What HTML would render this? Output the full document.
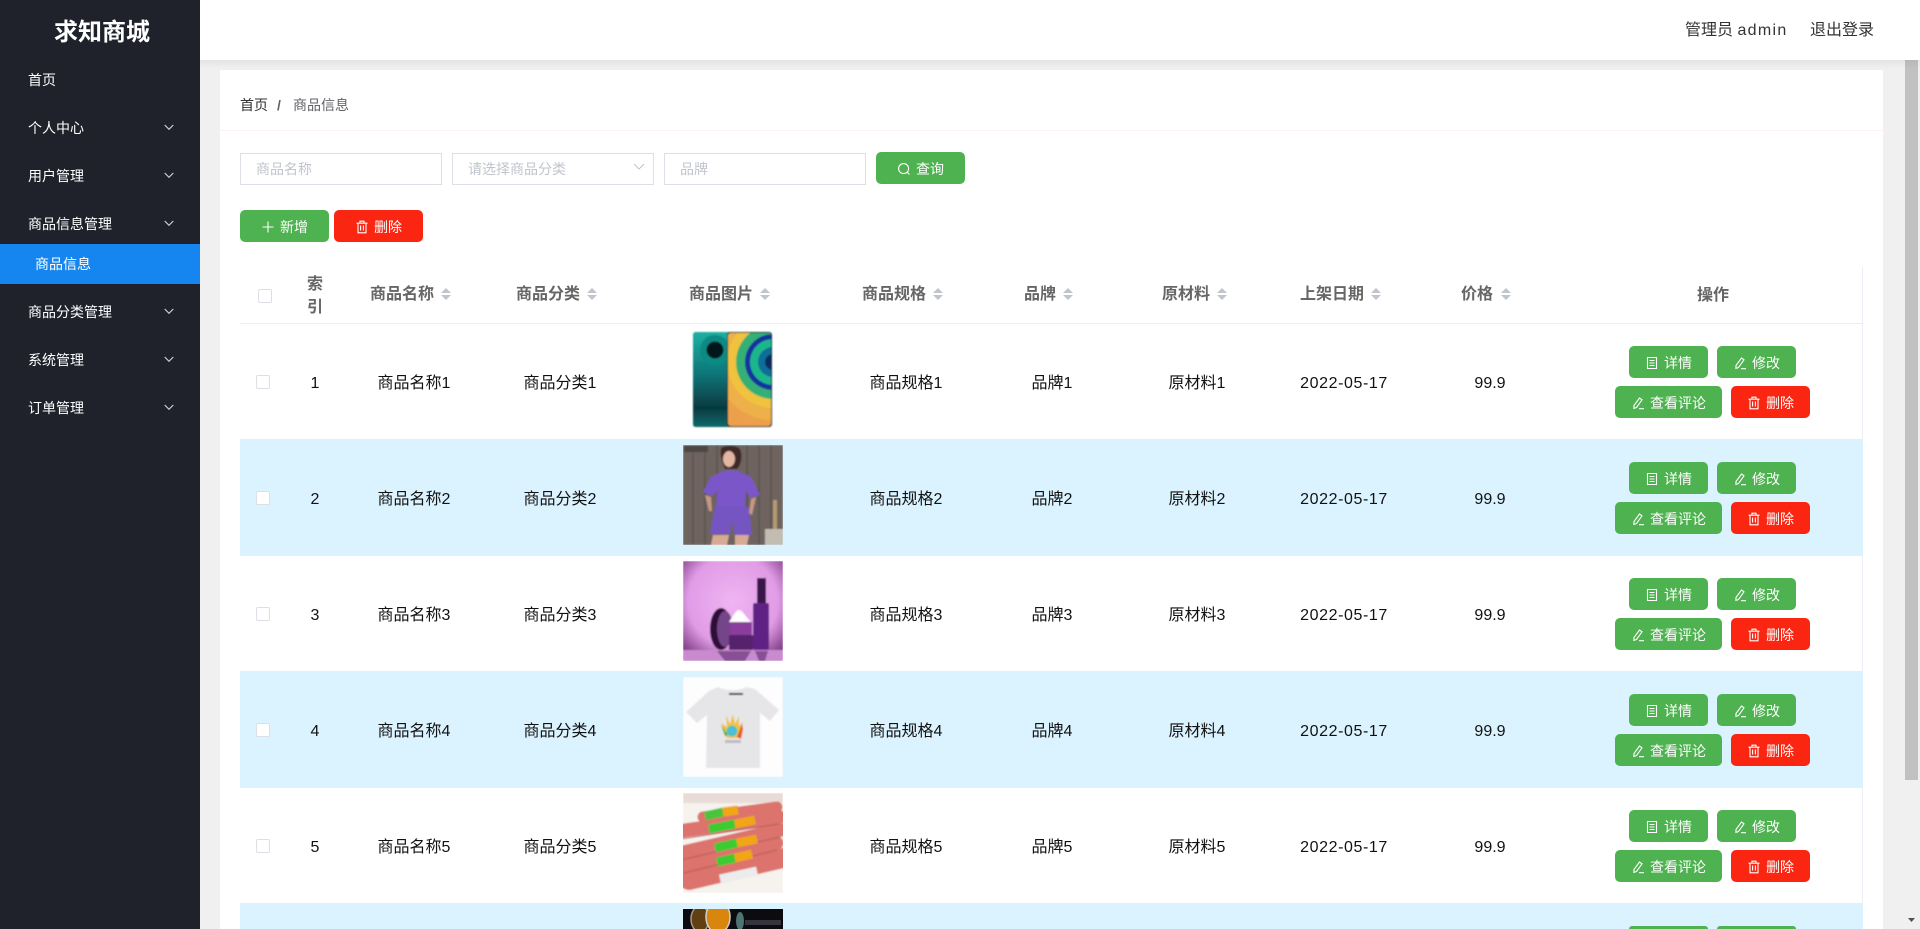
<!DOCTYPE html>
<html lang="zh-CN">
<head>
<meta charset="utf-8">
<title>求知商城</title>
<style>
*{box-sizing:border-box;margin:0;padding:0}
html,body{width:1920px;height:929px;overflow:hidden;background:#f0f0f0;font-family:"Liberation Sans","Noto Sans CJK SC",sans-serif}
#wrap{position:relative;width:1920px;height:929px;overflow:hidden;background:#f0f0f0}
.a{position:absolute}
#side{left:0;top:0;width:200px;height:929px;background:#1f222b;color:#fff;font-size:14px;z-index:4}
#side .logo{position:absolute;left:0;width:200px;top:15px;padding-left:4px;text-align:center;font-size:24px;font-weight:bold;line-height:36px}
#side .m{position:absolute;left:28px;line-height:21px;white-space:nowrap}
#side svg{position:absolute;left:164px;width:10px;height:7px}
#act{position:absolute;left:0;top:244px;width:200px;height:40px;background:#1586ef}
#head{left:0;top:0;width:1920px;height:60px;background:#fff;z-index:3;box-shadow:0 2px 8px rgba(0,0,0,.08)}
#head span{position:absolute;top:20px;font-size:16px;line-height:22px;color:#333;white-space:nowrap}
#card{left:220px;top:70px;width:1663px;height:859px;background:#fff}
#sb{left:1905px;top:60px;width:13px;height:720px;background:#c1c1c1}
.bc{position:absolute;top:95px;font-size:14px;line-height:21px;white-space:nowrap}
.inp{position:absolute;top:153px;width:202px;height:32px;border:1px solid #dcdfe6;background:#fff;color:#c0c4cc;font-size:14px;line-height:31px;padding-left:15px;white-space:nowrap}
.btn{position:absolute;height:32px;border-radius:5px;color:#fff;font-size:14px;line-height:34px;white-space:nowrap;text-align:center;overflow:hidden}
.g{background:#4db24f}
.r{background:#fa2612}
.btn svg{width:14px;height:14px;vertical-align:-2px;margin-right:5px}
.th{position:absolute;top:285px;font-size:16px;line-height:20px;font-weight:bold;color:#666;white-space:nowrap}
.up,.dn{position:absolute;width:0;height:0;border-left:5px solid transparent;border-right:5px solid transparent}
.up{top:288px;border-bottom:5px solid #c0c4cc}
.dn{top:295px;border-top:5px solid #c0c4cc}
.chk{position:absolute;width:14px;height:14px;border:1px solid #dcdfe6;border-radius:2px;background:#fff}
.bg{position:absolute;left:240px;width:1623px;background:#dbf3ff}
.row{position:absolute;left:0;width:1920px;height:116px}
.c{position:absolute;top:0;height:116px;line-height:120px;font-size:16px;color:#111;text-align:center;white-space:nowrap;width:140px}
.d{letter-spacing:.6px}
.row .chk{left:256px;top:51px}
.row svg.pic{position:absolute;left:683px;top:5px;width:100px;height:100px}
.b1{left:1629px;width:79px;top:22px}
.b2{left:1717px;width:79px;top:22px}
.b3{left:1615px;width:107px;top:62px}
.b4{left:1731px;width:79px;top:62px}
svg.i{fill:none;stroke:#fff;stroke-width:1.1}
</style>
</head>
<body>
<svg width="0" height="0" style="position:absolute">
<defs>
<symbol id="doc" viewBox="0 0 14 14"><path d="M2.5 1.5h9v11h-9z M4.5 4.5h5 M4.5 7h5 M4.5 9.5h5" fill="none" stroke="#fff" stroke-width="1.1"/></symbol>
<symbol id="pen" viewBox="0 0 14 14"><path d="M3 9.5 8.5 2l2.5 1.8-5.5 7.7-2.6.9zM8 12.7h5" fill="none" stroke="#fff" stroke-width="1.1"/></symbol>
<symbol id="del" viewBox="0 0 14 14"><path d="M1.5 3.2h11M5 3V1.2h4V3M3 3.2v9.6h8V3.2M5.6 5.5v5M8.4 5.5v5" fill="none" stroke="#fff" stroke-width="1.1"/></symbol>
<symbol id="chev" viewBox="0 0 10 7"><path d="M.7 1 5 5.3 9.3 1" fill="none" stroke="#c9ccd1" stroke-width="1.2"/></symbol>
<filter id="bl" x="-5%" y="-5%" width="110%" height="110%"><feGaussianBlur stdDeviation=".7"/></filter>
<clipPath id="scr"><rect x="45" y="4" width="43" height="93" rx="3"/></clipPath>
<linearGradient id="teal" x1="0" y1="0" x2="0" y2="1"><stop offset="0" stop-color="#1fb0a2"/><stop offset=".45" stop-color="#0b7477"/><stop offset=".8" stop-color="#06393f"/><stop offset="1" stop-color="#0b6a6c"/></linearGradient>
<radialGradient id="pk" cx=".5" cy=".4" r=".75"><stop offset="0" stop-color="#f0b4f2"/><stop offset=".6" stop-color="#e09ce6"/><stop offset="1" stop-color="#66246c"/></radialGradient>
</defs>
</svg>
<div id="wrap">
<div id="side" class="a">
<div class="logo">求知商城</div>
<div class="m" style="top:70px">首页</div>
<div class="m" style="top:118px">个人中心</div><svg style="top:124px"><use href="#chev"/></svg>
<div class="m" style="top:166px">用户管理</div><svg style="top:172px"><use href="#chev"/></svg>
<div class="m" style="top:214px">商品信息管理</div><svg style="top:220px"><use href="#chev"/></svg>
<div id="act"></div>
<div class="m" style="top:254px;left:35px">商品信息</div>
<div class="m" style="top:302px">商品分类管理</div><svg style="top:308px"><use href="#chev"/></svg>
<div class="m" style="top:350px">系统管理</div><svg style="top:356px"><use href="#chev"/></svg>
<div class="m" style="top:398px">订单管理</div><svg style="top:404px"><use href="#chev"/></svg>
</div>

<div id="head" class="a">
<span style="left:1685px">管理员 <span style="position:static;letter-spacing:1.3px">admin</span></span>
<span style="left:1810px">退出登录</span>
</div>

<div id="sb" class="a"></div>
<svg class="a" style="left:1908px;top:918px" width="7" height="4"><path d="M0 0h7L3.5 4z" fill="#505050"/></svg>
<div id="card" class="a"></div>

<div class="bc" style="left:240px;color:#303133">首页</div>
<div class="bc" style="left:277px;color:#606266;font-weight:bold">/</div>
<div class="bc" style="left:293px;color:#606266">商品信息</div>
<div class="a" style="left:220px;top:130px;width:1663px;height:1px;background:#fdf0f6"></div>

<div class="inp" style="left:240px">商品名称</div>
<div class="inp" style="left:452px">请选择商品分类
<svg class="a" style="left:180px;top:9px" width="12" height="8"><path d="M1 1l5 5 5-5" fill="none" stroke="#c0c4cc" stroke-width="1"/></svg></div>
<div class="inp" style="left:664px">品牌</div>
<div class="btn g" style="left:876px;top:152px;width:89px"><svg viewBox="0 0 14 14" class="i" style="margin-right:5px"><circle cx="6.6" cy="6.6" r="5"/><path d="M10.2 10.2 12.5 12.5"/></svg>查询</div>
<div class="btn g" style="left:240px;top:210px;width:89px"><svg viewBox="0 0 14 14" class="i"><path d="M7 1.5v11M1.5 7h11"/></svg>新增</div>
<div class="btn r" style="left:334px;top:210px;width:89px"><svg><use href="#del"/></svg>删除</div>

<div class="a" style="left:1862px;top:267px;width:1px;height:662px;background:#ebeef5"></div>
<div class="chk" style="left:258px;top:289px"></div>
<div class="th" style="left:307px;top:275px">索</div>
<div class="th" style="left:307px;top:298px">引</div>
<div class="th" style="left:370px">商品名称</div><i class="up" style="left:441px"></i><i class="dn" style="left:441px"></i>
<div class="th" style="left:516px">商品分类</div><i class="up" style="left:587px"></i><i class="dn" style="left:587px"></i>
<div class="th" style="left:689px">商品图片</div><i class="up" style="left:760px"></i><i class="dn" style="left:760px"></i>
<div class="th" style="left:862px">商品规格</div><i class="up" style="left:933px"></i><i class="dn" style="left:933px"></i>
<div class="th" style="left:1024px">品牌</div><i class="up" style="left:1063px"></i><i class="dn" style="left:1063px"></i>
<div class="th" style="left:1162px">原材料</div><i class="up" style="left:1217px"></i><i class="dn" style="left:1217px"></i>
<div class="th" style="left:1300px">上架日期</div><i class="up" style="left:1371px"></i><i class="dn" style="left:1371px"></i>
<div class="th" style="left:1461px">价格</div><i class="up" style="left:1501px"></i><i class="dn" style="left:1501px"></i>
<div class="th" style="left:1697px;top:286px">操作</div>
<div class="a" style="left:240px;top:323px;width:1623px;height:1px;background:#ebeef5"></div>

<div class="bg" style="top:439px;height:117px"></div>
<div class="bg" style="top:671px;height:117px"></div>
<div class="bg" style="top:903px;height:26px"></div>

<!-- row 1 -->
<div class="row" style="top:324px">
<div class="chk"></div><div class="c" style="left:245px">1</div><div class="c" style="left:344px">商品名称1</div><div class="c" style="left:490px">商品分类1</div>
<svg class="pic" viewBox="0 0 100 100"><g filter="url(#bl)"><rect x="10" y="3" width="44" height="95" rx="2.5" fill="url(#teal)"/><circle cx="32" cy="21" r="15" fill="#0f8a84"/><circle cx="32" cy="21" r="8.5" fill="#02161c"/><rect x="44" y="3" width="45" height="95" rx="3" fill="#17363a"/><g clip-path="url(#scr)"><rect x="45" y="4" width="43" height="93" fill="#eca04c"/><circle cx="90" cy="33" r="58" fill="#eeb04a"/><circle cx="90" cy="33" r="46" fill="#f0c23c"/><circle cx="90" cy="33" r="37" fill="#36b074"/><circle cx="90" cy="33" r="28" fill="#14329e"/><circle cx="90" cy="33" r="23" fill="#1fb68c"/><circle cx="90" cy="33" r="15" fill="#0f6e98"/><circle cx="90" cy="33" r="8" fill="#082c60"/></g></g></svg>
<div class="c" style="left:836px">商品规格1</div><div class="c" style="left:982px">品牌1</div><div class="c" style="left:1127px">原材料1</div><div class="c d" style="left:1274px">2022-05-17</div><div class="c" style="left:1420px">99.9</div>
<div class="btn g b1"><svg><use href="#doc"/></svg>详情</div><div class="btn g b2"><svg><use href="#pen"/></svg>修改</div><div class="btn g b3"><svg><use href="#pen"/></svg>查看评论</div><div class="btn r b4"><svg><use href="#del"/></svg>删除</div>
</div>

<!-- row 2 -->
<div class="row" style="top:440px">
<div class="chk"></div><div class="c" style="left:245px">2</div><div class="c" style="left:344px">商品名称2</div><div class="c" style="left:490px">商品分类2</div>
<svg class="pic" viewBox="0 0 100 100"><g filter="url(#bl)"><rect width="100" height="100" fill="#6e645f"/><path d="M10 0v100M22 0v100M34 0v100M64 0v100M76 0v100M88 0v100" stroke="#5f5652" stroke-width="2"/><rect x="1" y="1" width="24" height="6" fill="#4e4642"/><path d="M38 3c5-3 15-3 19 1 3 7 1 16-3 20l-12 0C38 16 37 9 38 3Z" fill="#3e2c26"/><ellipse cx="46" cy="14" rx="6" ry="8" fill="#e2b6a2"/><path d="M40 26 53 25 68 32 77 50 67 53 63 46 62 62H33L34 46 29 51 20 47 28 32Z" fill="#7a57c8"/><path d="M32 62H66L69 90H52L49 76 47 89H27Z" fill="#7454c2"/><path d="M22 50 28 52 29 66 26 66ZM68 54 73 52 69 70 66 68Z" fill="#c69884"/><path d="M30 90H46L44 100H28ZM52 90H66L64 100H52Z" fill="#d6aa94"/><path d="M90 55h4v30h-4z" fill="#b49a70"/><rect x="82" y="84" width="18" height="16" fill="#c2bcb2"/></g></svg>
<div class="c" style="left:836px">商品规格2</div><div class="c" style="left:982px">品牌2</div><div class="c" style="left:1127px">原材料2</div><div class="c d" style="left:1274px">2022-05-17</div><div class="c" style="left:1420px">99.9</div>
<div class="btn g b1"><svg><use href="#doc"/></svg>详情</div><div class="btn g b2"><svg><use href="#pen"/></svg>修改</div><div class="btn g b3"><svg><use href="#pen"/></svg>查看评论</div><div class="btn r b4"><svg><use href="#del"/></svg>删除</div>
</div>

<!-- row 3 -->
<div class="row" style="top:556px">
<div class="chk"></div><div class="c" style="left:245px">3</div><div class="c" style="left:344px">商品名称3</div><div class="c" style="left:490px">商品分类3</div>
<svg class="pic" viewBox="0 0 100 100"><g filter="url(#bl)"><rect width="100" height="100" fill="url(#pk)"/><rect y="89" width="100" height="11" fill="#c98ad0"/><rect x="74" y="17" width="9" height="25" fill="#3a1848"/><rect x="70" y="42" width="16" height="47" rx="2" fill="#5e2384"/><ellipse cx="38" cy="68" rx="11" ry="21" fill="#2e1138"/><ellipse cx="42" cy="68" rx="8" ry="18" fill="#74448a"/><path d="M46 61c4-6 7-12 10-12s7 7 12 12Z" fill="#fff"/><rect x="47" y="61" width="22" height="13" fill="#8a3e9c"/><rect x="46" y="74" width="24" height="15" rx="1" fill="#56226c"/><path d="M34 90h34l-6 10H42ZM72 90H85L82 100H76Z" fill="#5e2a6c" opacity=".6"/></g></svg>
<div class="c" style="left:836px">商品规格3</div><div class="c" style="left:982px">品牌3</div><div class="c" style="left:1127px">原材料3</div><div class="c d" style="left:1274px">2022-05-17</div><div class="c" style="left:1420px">99.9</div>
<div class="btn g b1"><svg><use href="#doc"/></svg>详情</div><div class="btn g b2"><svg><use href="#pen"/></svg>修改</div><div class="btn g b3"><svg><use href="#pen"/></svg>查看评论</div><div class="btn r b4"><svg><use href="#del"/></svg>删除</div>
</div>

<!-- row 4 -->
<div class="row" style="top:672px">
<div class="chk"></div><div class="c" style="left:245px">4</div><div class="c" style="left:344px">商品名称4</div><div class="c" style="left:490px">商品分类4</div>
<svg class="pic" viewBox="0 0 100 100"><g filter="url(#bl)"><rect width="100" height="100" fill="#fdfdfe"/><path d="M35 10C42 14 56 14 63 10L72 12 96 33 87 44 77 36 77 91H23L24 38 14 46 3 35 26 14Z" fill="#e6e6e8"/><path d="M46 16h14v2H46Z" fill="#333"/><path d="M44 61 38 46 44 50 43 38 47 47 50 37 52 47 56 39 56 49 60 45 57 61Z" fill="#f0c23a"/><circle cx="49" cy="54" r="5.5" fill="#4cc0d0"/><path d="M38 48l7 10-3 1Z" fill="#58b048"/><path d="M54 60l5-13 1 5-2 10Z" fill="#e85a2c"/><rect x="42" y="63" width="16" height="3" fill="#bcbcbc"/></g></svg>
<div class="c" style="left:836px">商品规格4</div><div class="c" style="left:982px">品牌4</div><div class="c" style="left:1127px">原材料4</div><div class="c d" style="left:1274px">2022-05-17</div><div class="c" style="left:1420px">99.9</div>
<div class="btn g b1"><svg><use href="#doc"/></svg>详情</div><div class="btn g b2"><svg><use href="#pen"/></svg>修改</div><div class="btn g b3"><svg><use href="#pen"/></svg>查看评论</div><div class="btn r b4"><svg><use href="#del"/></svg>删除</div>
</div>

<!-- row 5 -->
<div class="row" style="top:788px">
<div class="chk"></div><div class="c" style="left:245px">5</div><div class="c" style="left:344px">商品名称5</div><div class="c" style="left:490px">商品分类5</div>
<svg class="pic" viewBox="0 0 100 100"><g filter="url(#bl)"><rect width="100" height="100" fill="#f6f2ee"/><path d="M0 0h100v10H0Z" fill="#e9dcd6"/><g stroke="#dc736c" stroke-linecap="round"><path d="M20 24 94 14" stroke-width="11"/><path d="M-2 38 96 24" stroke-width="14"/><path d="M-2 60 97 37" stroke-width="14"/><path d="M1 73 94 50" stroke-width="13"/><path d="M6 87 100 65" stroke-width="20"/></g><path d="M-2 46 96 31M-2 67 97 44M1 80 94 57" stroke="#b85a5a" stroke-width="1"/><g stroke-width="9"><path d="M22 23 40 19" stroke="#49c43a"/><path d="M40 19 55 17" stroke="#f1a614"/><path d="M26 36 52 31" stroke="#3ecb30"/><path d="M52 31 72 27" stroke="#f1a614"/><path d="M32 55 54 50" stroke="#3ecb30"/><path d="M54 50 74 46" stroke="#f1a614"/><path d="M34 69 52 65" stroke="#3ecb30"/><path d="M52 65 69 61" stroke="#f1a614"/><path d="M37 86 74 78" stroke="#ececec"/></g></g></svg>
<div class="c" style="left:836px">商品规格5</div><div class="c" style="left:982px">品牌5</div><div class="c" style="left:1127px">原材料5</div><div class="c d" style="left:1274px">2022-05-17</div><div class="c" style="left:1420px">99.9</div>
<div class="btn g b1"><svg><use href="#doc"/></svg>详情</div><div class="btn g b2"><svg><use href="#pen"/></svg>修改</div><div class="btn g b3"><svg><use href="#pen"/></svg>查看评论</div><div class="btn r b4"><svg><use href="#del"/></svg>删除</div>
</div>

<!-- row 6 (only the visible top slice) -->
<div class="row" style="top:904px;height:25px">
<svg class="pic" viewBox="0 0 100 20" style="height:20px"><rect width="100" height="20" fill="#0c0c10"/><ellipse cx="17" cy="10" rx="9" ry="13" fill="#604010" stroke="#a29a90" stroke-width="1.5"/><ellipse cx="35" cy="8" rx="12" ry="16" fill="#d8860e" stroke="#cfcfd0" stroke-width="1.5"/><ellipse cx="57" cy="12" rx="4" ry="9" fill="#4e7476"/><rect x="62" y="11" width="36" height="5" fill="#34343e"/></svg>
<div class="btn g b1" style="height:3px;border-radius:3px 3px 0 0"></div><div class="btn g b2" style="height:3px;border-radius:3px 3px 0 0"></div>
</div>
</div>
</body>
</html>
